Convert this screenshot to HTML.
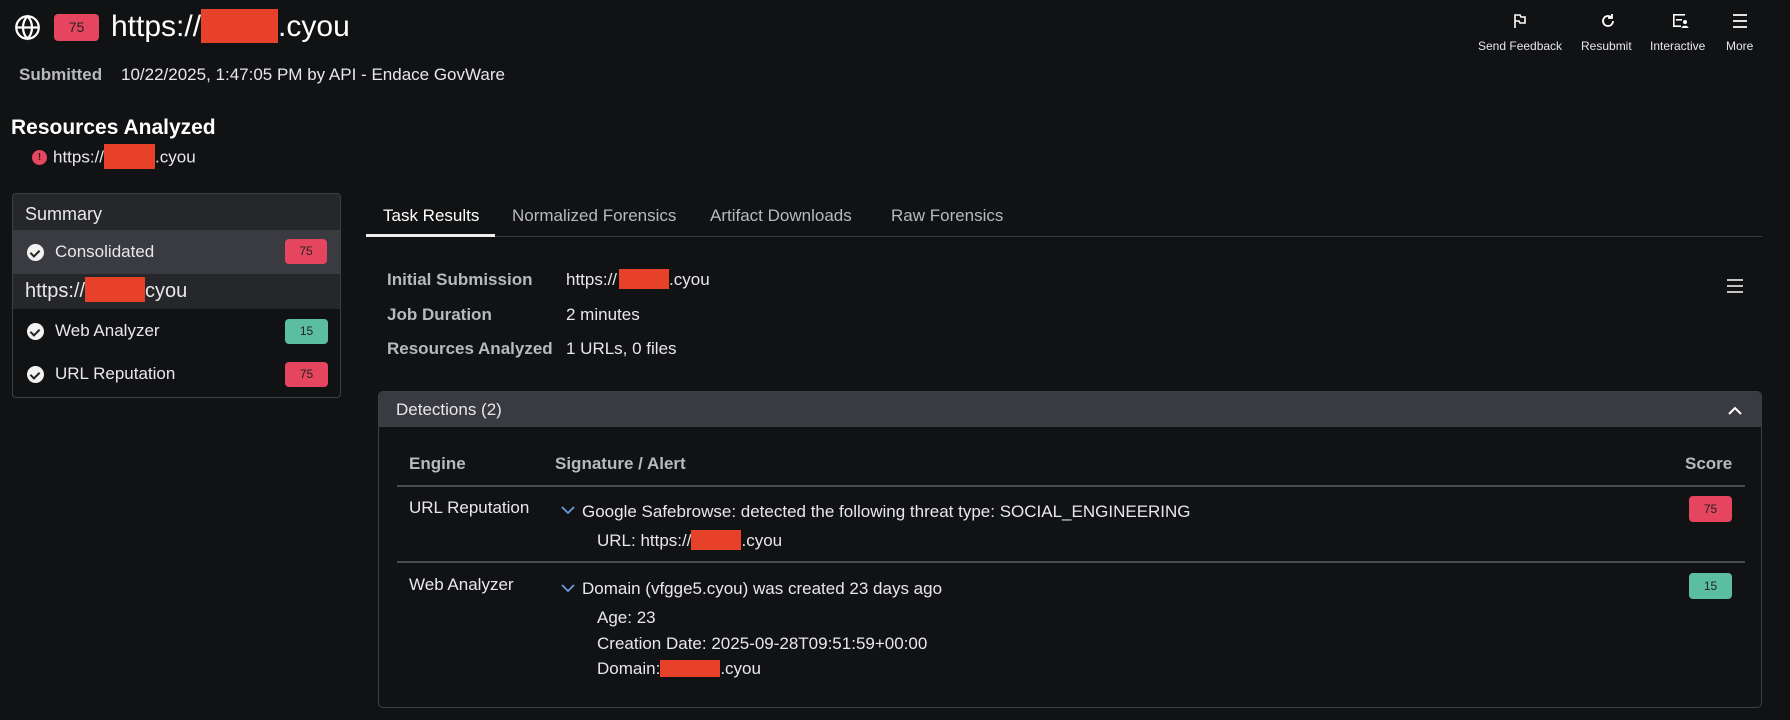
<!DOCTYPE html>
<html><head><meta charset="utf-8"><style>
*{margin:0;padding:0;box-sizing:border-box}
body{width:1790px;height:720px;background:#111214;color:#e8e8ea;font-family:"Liberation Sans",sans-serif;position:relative;overflow:hidden}
.a{position:absolute;white-space:nowrap}
.r{display:inline-block;background:#e8412a;vertical-align:middle}
.b{position:absolute;border-radius:4px;font-size:12px;color:#222;text-align:center}
.red{background:#e5455e}.grn{background:#5bbf9f}
.lbl{color:#b8b9bd}
.ck{position:absolute;width:17px;height:17px;border-radius:50%;background:#f2f2f2}
.ck:after{content:"";position:absolute;left:5px;top:3.5px;width:4px;height:7px;border:solid #222;border-width:0 2px 2px 0;transform:rotate(45deg)}
</style></head><body>
<svg class="a" style="left:14px;top:14px" width="27" height="27" viewBox="0 0 24 24" fill="none" stroke="#fff" stroke-width="2"><circle cx="12" cy="12" r="10"/><path d="M2 12h20M12 2c3 3 4 6.5 4 10s-1 7-4 10c-3-3-4-6.5-4-10s1-7 4-10z"/></svg>
<div class="b red" style="left:54px;top:14px;width:45px;height:27px;line-height:27px;font-size:14px">75</div>
<div class="a" style="left:111px;top:10px;font-size:30px;color:#fff">https://<span class="r" style="width:77px;height:34px;margin-top:-4px"></span>.cyou</div>
<div class="a lbl" style="left:19px;top:65px;font-size:17px;font-weight:bold">Submitted</div>
<div class="a" style="left:121px;top:65px;font-size:17px">10/22/2025, 1:47:05 PM by API - Endace GovWare</div>
<svg class="a" style="left:1512px;top:13px" width="16" height="16" viewBox="0 0 16 16" fill="none" stroke="#fff" stroke-width="1.6"><path d="M3 15V2h5l1 2h4v6H8l-1-2H3"/></svg>
<svg class="a" style="left:1600px;top:13px" width="16" height="16" viewBox="0 0 16 16" fill="none" stroke="#fff" stroke-width="1.8"><path d="M13 8a5 5 0 1 1-2-4M12 1v4H8"/></svg>
<svg class="a" style="left:1672px;top:13px" width="18" height="16" viewBox="0 0 18 16" fill="#fff"><rect x="1" y="1" width="12" height="1.6"/><rect x="1" y="1" width="1.6" height="13"/><rect x="1" y="12.4" width="8" height="1.6"/><rect x="4" y="6" width="6" height="1.6"/><circle cx="13" cy="9" r="2"/><path d="M9.5 15c0-3 7-3 7 0z"/></svg>
<svg class="a" style="left:1732px;top:13px" width="16" height="16" viewBox="0 0 16 16" stroke="#fff" stroke-width="1.8"><path d="M1 2h14M1 8h14M1 14h14"/></svg>
<div class="a" style="left:1478px;top:39px;font-size:12px">Send Feedback</div>
<div class="a" style="left:1581px;top:39px;font-size:12px">Resubmit</div>
<div class="a" style="left:1650px;top:39px;font-size:12px">Interactive</div>
<div class="a" style="left:1726px;top:39px;font-size:12px">More</div>
<div class="a" style="left:11px;top:116px;font-size:21px;font-weight:bold;color:#fff">Resources Analyzed</div>
<div class="a" style="left:32px;top:150px;width:15px;height:15px;border-radius:50%;background:#e5455e;color:#222;font-size:10px;font-weight:bold;text-align:center;line-height:15px">!</div>
<div class="a" style="left:53px;top:147px;font-size:17px">https://<span class="r" style="width:51px;height:25px;margin-top:-3px"></span>.cyou</div>
<div class="a" style="left:12px;top:193px;width:329px;height:205px;border:1px solid #3e3f44;border-radius:4px;overflow:hidden;background:#111214">
<div style="height:36px;background:#26272b;font-size:18px;padding:10px 0 0 12px">Summary</div>
<div style="height:44px;background:#3a3b40;position:relative"><div class="ck" style="left:14px;top:14px"></div><div class="a" style="left:42px;top:12px;font-size:17px">Consolidated</div><div class="b red" style="left:272px;top:9px;width:42px;height:25px;line-height:25px">75</div></div>
<div style="height:35px;background:#26272b;font-size:20px;padding:6px 0 0 12px">https://<span class="r" style="width:60px;height:25px;margin-top:-4px"></span>cyou</div>
<div style="height:44px;position:relative"><div class="ck" style="left:14px;top:14px"></div><div class="a" style="left:42px;top:12px;font-size:17px">Web Analyzer</div><div class="b grn" style="left:272px;top:10px;width:43px;height:25px;line-height:25px">15</div></div>
<div style="height:44px;position:relative"><div class="ck" style="left:14px;top:13px"></div><div class="a" style="left:42px;top:11px;font-size:17px">URL Reputation</div><div class="b red" style="left:272px;top:9px;width:43px;height:25px;line-height:25px">75</div></div>
</div>
<div class="a" style="left:366px;top:236px;width:1396px;height:1px;background:#3a3b40"></div>
<div class="a" style="left:366px;top:234px;width:129px;height:3px;background:#eee"></div>
<div class="a" style="left:383px;top:206px;font-size:17px;color:#fff">Task Results</div>
<div class="a lbl" style="left:512px;top:206px;font-size:17px">Normalized Forensics</div>
<div class="a lbl" style="left:710px;top:206px;font-size:17px">Artifact Downloads</div>
<div class="a lbl" style="left:891px;top:206px;font-size:17px">Raw Forensics</div>
<div class="a lbl" style="left:387px;top:270px;font-size:17px;font-weight:bold">Initial Submission</div>
<div class="a lbl" style="left:387px;top:305px;font-size:17px;font-weight:bold">Job Duration</div>
<div class="a lbl" style="left:387px;top:339px;font-size:17px;font-weight:bold">Resources Analyzed</div>
<div class="a" style="left:566px;top:270px;font-size:17px">https://<span class="r" style="width:50px;height:20px;margin-top:-3px;margin-left:2px"></span>.cyou</div>
<div class="a" style="left:566px;top:305px;font-size:17px">2 minutes</div>
<div class="a" style="left:566px;top:339px;font-size:17px">1 URLs, 0 files</div>
<svg class="a" style="left:1727px;top:278px" width="16" height="16" viewBox="0 0 16 16" stroke="#fff" stroke-width="1.6"><path d="M0 2h16M0 8h16M0 14h16"/></svg>
<div class="a" style="left:378px;top:391px;width:1384px;height:317px;border:1px solid #3e3f44;border-radius:5px;overflow:hidden">
<div style="height:35px;background:#3a3b40;font-size:17px;padding:8px 0 0 17px">Detections (2)</div>
<svg class="a" style="left:1348px;top:14px" width="16" height="10" viewBox="0 0 16 10" fill="none" stroke="#fff" stroke-width="2"><path d="M2 8l6-6 6 6"/></svg>
</div>
<div class="a lbl" style="left:409px;top:454px;font-size:17px;font-weight:bold">Engine</div>
<div class="a lbl" style="left:555px;top:454px;font-size:17px;font-weight:bold">Signature / Alert</div>
<div class="a lbl" style="left:1685px;top:454px;font-size:17px;font-weight:bold">Score</div>
<div class="a" style="left:397px;top:485px;width:1348px;height:2px;background:#4a4b50"></div>
<div class="a" style="left:397px;top:561px;width:1348px;height:2px;background:#4a4b50"></div>
<div class="a" style="left:409px;top:498px;font-size:17px">URL Reputation</div>
<svg class="a" style="left:561px;top:506px" width="14" height="9" viewBox="0 0 14 9" fill="none" stroke="#6a9be0" stroke-width="1.8"><path d="M1 1l6 6 6-6"/></svg>
<div class="a" style="left:582px;top:502px;font-size:17px">Google Safebrowse: detected the following threat type: SOCIAL_ENGINEERING</div>
<div class="a" style="left:597px;top:531px;font-size:17px">URL: https://<span class="r" style="width:50px;height:20px;margin-top:-3px"></span>.cyou</div>
<div class="b red" style="left:1689px;top:496px;width:43px;height:26px;line-height:26px">75</div>
<div class="a" style="left:409px;top:575px;font-size:17px">Web Analyzer</div>
<svg class="a" style="left:561px;top:584px" width="14" height="9" viewBox="0 0 14 9" fill="none" stroke="#6a9be0" stroke-width="1.8"><path d="M1 1l6 6 6-6"/></svg>
<div class="a" style="left:582px;top:579px;font-size:17px">Domain (vfgge5.cyou) was created 23 days ago</div>
<div class="a" style="left:597px;top:608px;font-size:17px">Age: 23</div>
<div class="a" style="left:597px;top:634px;font-size:17px">Creation Date: 2025-09-28T09:51:59+00:00</div>
<div class="a" style="left:597px;top:659px;font-size:17px">Domain:<span class="r" style="width:60px;height:17px;margin-top:-3px"></span>.cyou</div>
<div class="b grn" style="left:1689px;top:573px;width:43px;height:26px;line-height:26px">15</div>
</body></html>
